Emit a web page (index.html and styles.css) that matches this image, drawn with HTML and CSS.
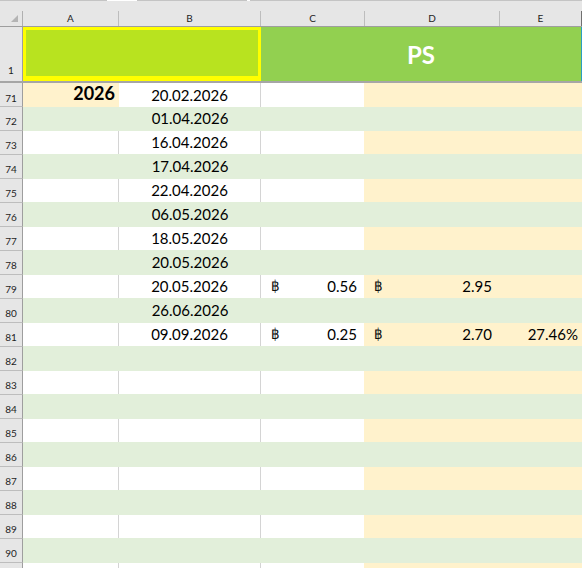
FILE: index.html
```html
<!DOCTYPE html>
<html>
<head>
<meta charset="utf-8">
<link rel="stylesheet" href="styles.css">
</head>
<body>
<div class="top">
  <div class="tabs"><span class="seg s1"></span><span class="gap g1"></span><span class="seg s2"></span><span class="gap g2"></span><span class="seg s3"></span></div>
</div>
<div class="grid colheads">
  <div class="ch corner"><svg width="22" height="15" viewBox="0 0 22 15"><polygon points="18,4 18,11 11,11" fill="#b4b4b4"/></svg></div>
  <div class="ch">A</div>
  <div class="ch">B</div>
  <div class="ch">C</div>
  <div class="ch">D</div>
  <div class="ch last">E</div>
</div>
<div class="grid r1">
  <div class="rh rh1">1</div>
  <div class="mab"></div>
  <div class="mce">PS</div>
</div>

<div class="grid row w"><div class="rh">71</div><div class="cell a cream year">2026</div><div class="cell b">20.02.2026</div><div class="cell c"></div><div class="cell d"></div><div class="cell e"></div></div>
<div class="grid row g"><div class="rh">72</div><div class="cell a"></div><div class="cell b">01.04.2026</div><div class="cell c"></div><div class="cell d"></div><div class="cell e"></div></div>
<div class="grid row w"><div class="rh">73</div><div class="cell a"></div><div class="cell b">16.04.2026</div><div class="cell c"></div><div class="cell d"></div><div class="cell e"></div></div>
<div class="grid row g"><div class="rh">74</div><div class="cell a"></div><div class="cell b">17.04.2026</div><div class="cell c"></div><div class="cell d"></div><div class="cell e"></div></div>
<div class="grid row w"><div class="rh">75</div><div class="cell a"></div><div class="cell b">22.04.2026</div><div class="cell c"></div><div class="cell d"></div><div class="cell e"></div></div>
<div class="grid row g"><div class="rh">76</div><div class="cell a"></div><div class="cell b">06.05.2026</div><div class="cell c"></div><div class="cell d"></div><div class="cell e"></div></div>
<div class="grid row w"><div class="rh">77</div><div class="cell a"></div><div class="cell b">18.05.2026</div><div class="cell c"></div><div class="cell d"></div><div class="cell e"></div></div>
<div class="grid row g"><div class="rh">78</div><div class="cell a"></div><div class="cell b">20.05.2026</div><div class="cell c"></div><div class="cell d"></div><div class="cell e"></div></div>
<div class="grid row w"><div class="rh">79</div><div class="cell a"></div><div class="cell b">20.05.2026</div><div class="cell c acc"><span class="bt">฿</span><span>0.56</span></div><div class="cell d acc"><span class="bt">฿</span><span>2.95</span></div><div class="cell e"></div></div>
<div class="grid row g"><div class="rh">80</div><div class="cell a"></div><div class="cell b">26.06.2026</div><div class="cell c"></div><div class="cell d"></div><div class="cell e"></div></div>
<div class="grid row w"><div class="rh">81</div><div class="cell a"></div><div class="cell b">09.09.2026</div><div class="cell c acc"><span class="bt">฿</span><span>0.25</span></div><div class="cell d acc"><span class="bt">฿</span><span>2.70</span></div><div class="cell e">27.46%</div></div>
<div class="grid row g"><div class="rh">82</div><div class="cell a"></div><div class="cell b"></div><div class="cell c"></div><div class="cell d"></div><div class="cell e"></div></div>
<div class="grid row w"><div class="rh">83</div><div class="cell a"></div><div class="cell b"></div><div class="cell c"></div><div class="cell d"></div><div class="cell e"></div></div>
<div class="grid row g"><div class="rh">84</div><div class="cell a"></div><div class="cell b"></div><div class="cell c"></div><div class="cell d"></div><div class="cell e"></div></div>
<div class="grid row w"><div class="rh">85</div><div class="cell a"></div><div class="cell b"></div><div class="cell c"></div><div class="cell d"></div><div class="cell e"></div></div>
<div class="grid row g"><div class="rh">86</div><div class="cell a"></div><div class="cell b"></div><div class="cell c"></div><div class="cell d"></div><div class="cell e"></div></div>
<div class="grid row w"><div class="rh">87</div><div class="cell a"></div><div class="cell b"></div><div class="cell c"></div><div class="cell d"></div><div class="cell e"></div></div>
<div class="grid row g"><div class="rh">88</div><div class="cell a"></div><div class="cell b"></div><div class="cell c"></div><div class="cell d"></div><div class="cell e"></div></div>
<div class="grid row w"><div class="rh">89</div><div class="cell a"></div><div class="cell b"></div><div class="cell c"></div><div class="cell d"></div><div class="cell e"></div></div>
<div class="grid row g"><div class="rh">90</div><div class="cell a"></div><div class="cell b"></div><div class="cell c"></div><div class="cell d"></div><div class="cell e"></div></div>
<div class="grid row w"><div class="rh"></div><div class="cell a"></div><div class="cell b"></div><div class="cell c"></div><div class="cell d"></div><div class="cell e"></div></div>
</body>
</html>
```
FILE: styles.css
```css
* { box-sizing: border-box; }
html, body { margin: 0; padding: 0; }
body {
  width: 582px;
  height: 568px;
  overflow: hidden;
  background: #fff;
  font-family: Lato, "Open Sans", sans-serif;
  color: #000;
}
.grid {
  display: grid;
  grid-template-columns: 23px 96px 142px 104px 135px 82px;
}
.top { height: 11px; background: #e6e6e6; }
.tabs { display: flex; height: 1px; }
.seg { background: #c4c4c4; }
.gap { background: #fff; }
.s1 { width: 107px; }
.g1 { width: 30px; }
.s2 { width: 110px; }
.g2 { width: 3px; }
.s3 { flex: 1; }

.colheads {
  height: 16px;
  background: #e6e6e6;
  border-bottom: 1px solid #9e9e9e;
}
.ch {
  border-right: 1px solid #bdbdbd;
  font-size: 10px;
  line-height: 15px;
  text-align: center;
  color: #1e1e1e;
}
.ch.corner { border-right-color: #b0b0b0; }
.ch.corner svg { display: block; }
.ch.last { border-right-color: #707070; }

.r1 {
  height: 56px;
  border-bottom: 2px solid #a6a6a6;
}
.rh {
  background: #e6e6e6;
  border-right: 1px solid #9e9e9e;
  display: flex;
  align-items: flex-end;
  justify-content: center;
  font-size: 10px;
  line-height: 12px;
  padding-bottom: 3px;
  color: #1e1e1e;
}
.rh1 { padding-bottom: 5px; }
.mab {
  grid-column: span 2;
  background: #b8e31f;
  border: 3px solid #ffff00;
  border-bottom-width: 5px;
}
.mce {
  grid-column: span 3;
  background: #92d050;
  border-right: 1px solid #2b9ec0;
  display: flex;
  align-items: center;
  justify-content: center;
  color: #fff;
  font-weight: 700;
  font-size: 24px;
}

.row.w { height: 23px; }
.row.g { height: 25px; background: #e2efda; }
.row.g .rh {
  border-top: 1px solid #bdbdbd;
  border-bottom: 1px solid #bdbdbd;
}
.cell {
  display: flex;
  align-items: flex-end;
  font-size: 15px;
  line-height: 18px;
  padding-bottom: 3px;
  white-space: nowrap;
}
.row.g .cell { padding-bottom: 4px; }
.row.w .a, .row.w .b { background: #fff; border-right: 1px solid #d4d4d4; }
.row.w .c { background: #fff; border-right: 1px solid #fff2cc; }
.row.w .d, .row.w .e { background: #fff2cc; }
.row.w .a.cream { background: #fff2cc; border-right-color: #fff2cc; }

.b { justify-content: center; }
.year {
  justify-content: flex-end;
  padding-right: 3px;
  font-weight: 700;
  font-size: 18px;
  line-height: 21px;
}
.acc { justify-content: space-between; }
.c.acc { padding-left: 10px; padding-right: 7px; }
.d.acc { padding-left: 9px; padding-right: 8px; }
.e { justify-content: flex-end; padding-right: 4px; }
.bt {
  font-family: "DejaVu Sans Condensed", "DejaVu Sans", sans-serif;
  font-size: 15px;
  color: #111;
}
```
